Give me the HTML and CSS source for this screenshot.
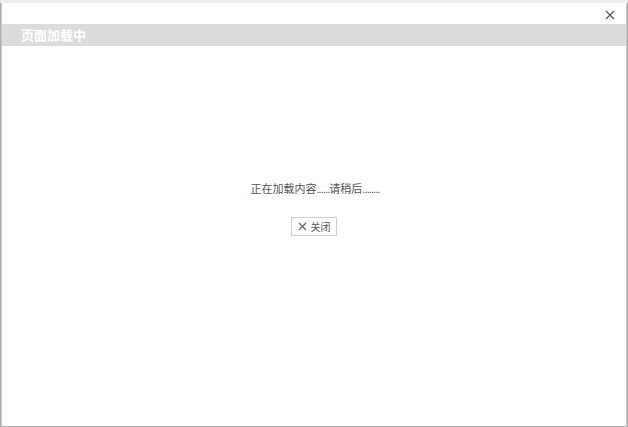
FILE: index.html
```html
<!DOCTYPE html>
<html lang="zh">
<head>
<meta charset="utf-8">
<title>页面加载中</title>
<link rel="stylesheet" href="styles.css">
</head>
<body>
<div class="backdrop">
  <div class="dialog">
    <div class="topbar">
      <button class="x-close" aria-label="close">
        <svg width="10" height="10" viewBox="0 0 10 10"><path d="M1 1L9 9M9 1L1 9" stroke="#555" stroke-width="1.2" fill="none"/></svg>
      </button>
    </div>
    <div class="titlebar">页面加载中</div>
    <div class="content">
      <p class="msg">正在加载内容<span class="dots">......</span>请稍后<span class="dots">........</span></p>
      <button class="btn-close">
        <svg width="9" height="9" viewBox="0 0 9 9"><path d="M1 1L8 8M8 1L1 8" stroke="#666" stroke-width="1.2" fill="none"/></svg>
        <span>关闭</span>
      </button>
    </div>
  </div>
</div>
</body>
</html>
```
FILE: styles.css
```css
html, body {
  margin: 0;
  padding: 0;
  width: 628px;
  height: 427px;
  overflow: hidden;
  background: #d8d8d8;
  font-family: "Noto Sans CJK SC", "Noto Sans", sans-serif;
}
.backdrop {
  width: 628px;
  height: 427px;
  box-sizing: border-box;
  padding: 3px 1px 1px 1px;
  background: linear-gradient(#eceef0, #eceef0 3px, #b0b0b0 3px);
}
.dialog {
  height: 100%;
  box-sizing: border-box;
  background: #fff;
  border-left: 1px solid #c8c8c8;
  border-right: 1px solid #c8c8c8;
  display: flex;
  flex-direction: column;
}
.topbar {
  height: 21px;
  display: flex;
  justify-content: flex-end;
  align-items: center;
  padding-right: 10px;
}
.x-close {
  border: 0;
  background: none;
  padding: 0;
  width: 12px;
  height: 12px;
  display: flex;
  align-items: center;
  justify-content: center;
  margin-top: 2px;
}
.titlebar {
  height: 22px;
  background: #dcdcdc;
  color: #fff;
  font-weight: bold;
  font-size: 13px;
  line-height: 22px;
  padding-left: 19px;
}
.content {
  flex: 1;
  display: flex;
  flex-direction: column;
  align-items: center;
  padding-top: 134px;
}
.msg {
  margin: 0;
  font-size: 11px;
  color: #555;
  line-height: 16px;
  padding-left: 2px;
}
.dots {
  font-family: "Liberation Sans", sans-serif;
  letter-spacing: -0.9px;
}
.btn-close {
  margin-top: 20px;
  height: 19px;
  width: 46px;
  box-sizing: border-box;
  border: 1px solid #d0d0d0;
  background: #fff;
  display: flex;
  align-items: center;
  justify-content: center;
  gap: 4px;
  padding: 0;
  font-family: "Noto Sans CJK SC", "Noto Sans", sans-serif;
  font-size: 10px;
  color: #555;
}
```
